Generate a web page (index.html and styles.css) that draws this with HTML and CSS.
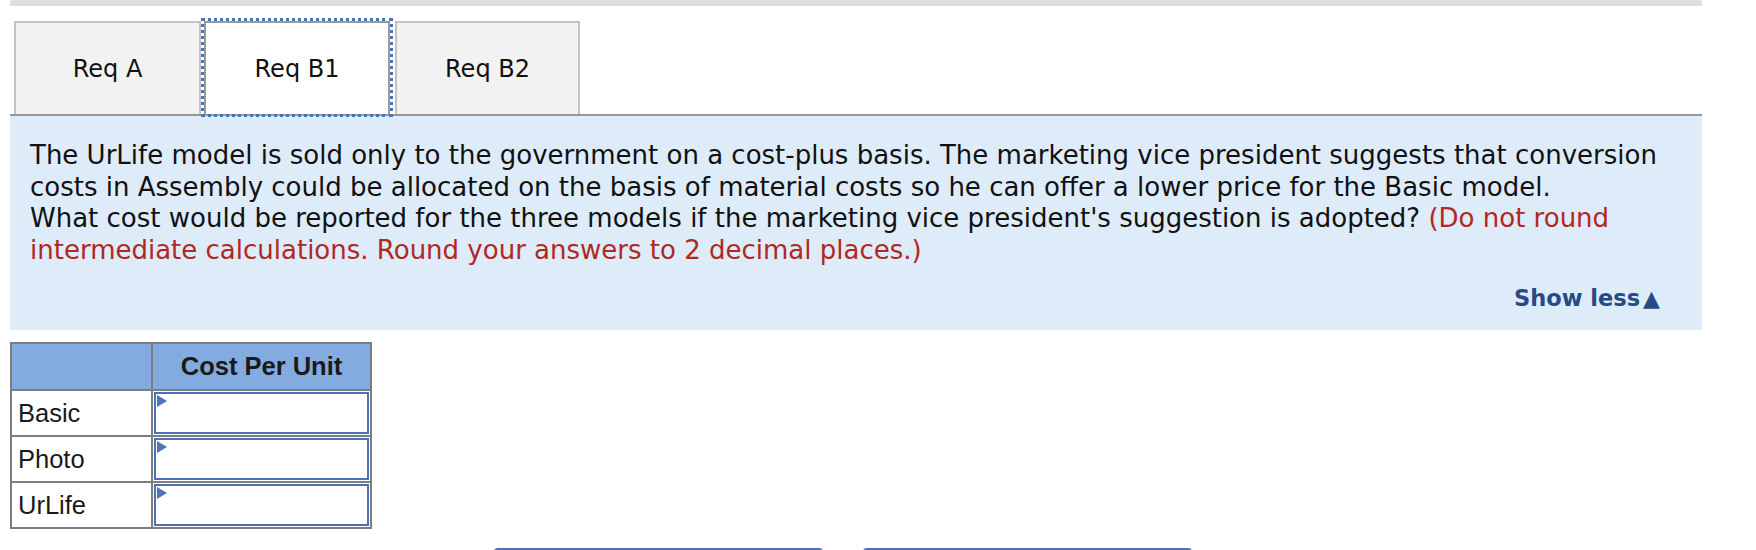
FILE: index.html
```html
<!DOCTYPE html>
<html>
<head>
    <title>Req B1</title>
    <link rel="stylesheet" href="styles.css">
</head>
<body>
    <div class="page">
        <div class="top-bar"></div>

        <div class="tabs">
            <div class="tab tab-a">Req A</div>
            <div class="tab tab-b1 active">Req B1</div>
            <div class="tab tab-b2">Req B2</div>
        </div>

        <div class="question">
            <p class="question-text">
                The UrLife model is sold only to the government on a cost-plus basis. The marketing vice president suggests that conversion costs in Assembly could be allocated on the basis of material costs so he can offer a lower price for the Basic model.<br>
                What cost would be reported for the three models if the marketing vice president's suggestion is adopted? <span class="note">(Do not round intermediate calculations. Round your answers to 2 decimal places.)</span>
            </p>
            <div class="show-less">Show less<span class="arrow">&#9650;</span></div>
        </div>

        <table class="answer-table">
            <tr>
                <th class="blank"></th>
                <th>Cost Per Unit</th>
            </tr>
            <tr>
                <td class="model">Basic</td>
                <td class="entry"><div class="input"></div></td>
            </tr>
            <tr>
                <td class="model">Photo</td>
                <td class="entry"><div class="input"></div></td>
            </tr>
            <tr>
                <td class="model">UrLife</td>
                <td class="entry"><div class="input"></div></td>
            </tr>
        </table>

        <div class="buttons">
            <div class="btn"></div>
            <div class="btn"></div>
        </div>
    </div>
</body>
</html>
```

FILE: styles.css
```css
html, body {
    margin: 0;
    overflow: hidden;
    background: #fff;
}

.page {
    width: 1692px;
    margin-left: 10px;
    font-family: "DejaVu Sans", Verdana, sans-serif;
    color: #111;
}

.top-bar {
    height: 6px;
    background: #dfdfdf;
}

.tabs {
    display: flex;
    height: 93px;
    margin-top: 15px;
    padding-left: 4px;
}

.tab {
    box-sizing: border-box;
    height: 93px;
    display: flex;
    align-items: center;
    justify-content: center;
    font-size: 24px;
    background: #f2f2f2;
    border: 2px solid #c4c4c4;
    border-bottom: none;
}

.tab-a {
    width: 187px;
}

.tab-b1 {
    width: 186px;
    margin-left: 3px;
}

.tab-b2 {
    width: 185px;
    margin-left: 5px;
}

.tab.active {
    position: relative;
    z-index: 1;
    background: #fff;
    border-color: #999;
    outline: 3px dotted #4a76b8;
}

.question {
    background: #deebf8;
    border-top: 2px solid #979797;
    height: 214px;
    padding: 0 10px 0 20px;
}

.question-text {
    margin: 0;
    padding-top: 24px;
    font-size: 26px;
    line-height: 31.5px;
}

.note {
    color: #b0281f;
}

.show-less {
    margin-top: 17px;
    margin-right: 32px;
    text-align: right;
    font-size: 22.5px;
    line-height: 31px;
    font-weight: bold;
    color: #264a86;
}

.arrow {
    font-size: 22px;
    margin-left: 3px;
}

.answer-table {
    margin-top: 12px;
    border-collapse: collapse;
    font-family: "Liberation Sans", Arial, sans-serif;
    font-size: 25.5px;
    color: #1a1a1a;
}

.answer-table th,
.answer-table td {
    border: 2px solid #7d7d7d;
    padding: 0;
}

.answer-table th {
    background: #84abe0;
    height: 45px;
    font-weight: bold;
}

.answer-table th.blank {
    width: 139px;
}

.answer-table td {
    height: 44px;
}

.model {
    padding-left: 6px !important;
    text-align: left;
}

.entry {
    width: 217px;
}

.input {
    position: relative;
    box-sizing: border-box;
    height: 42px;
    margin: 0 1px;
    background: #fff;
    border: 2px solid #4a72b5;
}

.input::before {
    content: "";
    position: absolute;
    left: 1px;
    top: 1px;
    border-top: 6px solid transparent;
    border-bottom: 6px solid transparent;
    border-left: 10px solid #4a76b8;
}

.buttons {
    display: flex;
    gap: 40px;
    margin-top: 19px;
    margin-left: 484px;
}

.btn {
    width: 323px;
    height: 40px;
    border: 3px solid #4a72b5;
    border-radius: 4px;
    background: #fff;
}
```
